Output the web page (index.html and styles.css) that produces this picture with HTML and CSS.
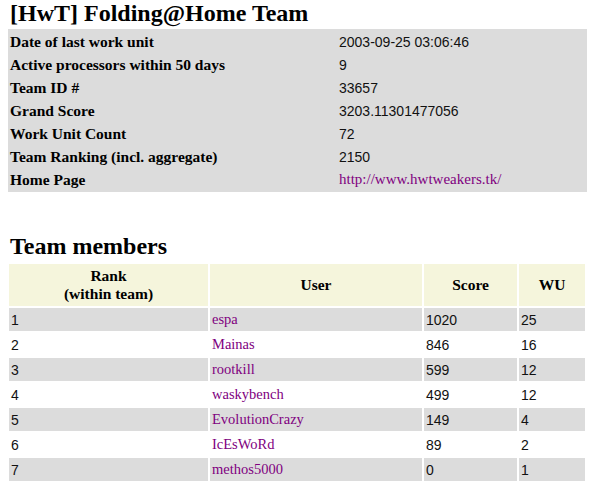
FILE: index.html
```html
<!DOCTYPE html>
<html>
<head>
<meta charset="utf-8">
<title>[HwT] Folding@Home Team</title>
<link rel="stylesheet" href="styles.css">
</head>
<body>
<h1 class="title">[HwT] Folding@Home Team</h1>
<table class="info">
  <tr><td class="label">Date of last work unit</td><td class="num">2003-09-25 03:06:46</td></tr>
  <tr><td class="label">Active processors within 50 days</td><td class="num">9</td></tr>
  <tr><td class="label">Team ID #</td><td class="num">33657</td></tr>
  <tr><td class="label">Grand Score</td><td class="num">3203.11301477056</td></tr>
  <tr><td class="label">Work Unit Count</td><td class="num">72</td></tr>
  <tr><td class="label">Team Ranking (incl. aggregate)</td><td class="num">2150</td></tr>
  <tr><td class="label">Home Page</td><td class="link"><a href="#">http://www.hwtweakers.tk/</a></td></tr>
</table>
<h2 class="section">Team members</h2>
<table class="members">
  <tr>
    <th class="c-rank">Rank<br>(within team)</th>
    <th class="c-user">User</th>
    <th class="c-score">Score</th>
    <th class="c-wu">WU</th>
  </tr>
  <tr class="odd"><td class="num">1</td><td class="name"><a href="#">espa</a></td><td class="num">1020</td><td class="num">25</td></tr>
  <tr><td class="num">2</td><td class="name"><a href="#">Mainas</a></td><td class="num">846</td><td class="num">16</td></tr>
  <tr class="odd"><td class="num">3</td><td class="name"><a href="#">rootkill</a></td><td class="num">599</td><td class="num">12</td></tr>
  <tr><td class="num">4</td><td class="name"><a href="#">waskybench</a></td><td class="num">499</td><td class="num">12</td></tr>
  <tr class="odd"><td class="num">5</td><td class="name"><a href="#">EvolutionCrazy</a></td><td class="num">149</td><td class="num">4</td></tr>
  <tr><td class="num">6</td><td class="name"><a href="#">IcEsWoRd</a></td><td class="num">89</td><td class="num">2</td></tr>
  <tr class="odd"><td class="num">7</td><td class="name"><a href="#">methos5000</a></td><td class="num">0</td><td class="num">1</td></tr>
</table>
</body>
</html>
```
FILE: styles.css
```css
html, body {
  background: #ffffff;
}
body {
  margin: 0;
  padding: 0 5px 0 8px;
  font-family: "Liberation Serif", "Times New Roman", serif;
  color: #000000;
}
.title {
  margin: 0 0 3px 2px;
  font-size: 24px;
  line-height: 26px;
  font-weight: bold;
}
.info {
  width: 579px;
  table-layout: fixed;
  border-collapse: separate;
  border-spacing: 0;
  padding: 1px 0;
  background: #dcdcdc;
}
.info td {
  height: 23px;
  padding: 0 2px;
  box-sizing: border-box;
  vertical-align: middle;
}
.info .label {
  width: 329px;
  font-weight: bold;
  font-size: 15.5px;
}
.num {
  font-family: "Liberation Sans", Arial, sans-serif;
  font-size: 14px;
  color: #111111;
}
.link {
  font-size: 15px;
}
.name {
  font-size: 14.5px;
}
.link a,
.name a {
  color: #800080;
  text-decoration: none;
}
.section {
  margin: 41px 0 3px 2px;
  font-size: 24px;
  line-height: 26px;
  font-weight: bold;
}
.members {
  width: 580px;
  margin-left: -1px;
  table-layout: fixed;
  border-collapse: separate;
  border-spacing: 2px;
}
.members th {
  height: 42px;
  padding: 0 2px;
  box-sizing: border-box;
  background: #f5f5dc;
  font-size: 15.5px;
  line-height: 18px;
  font-weight: bold;
  text-align: center;
  vertical-align: middle;
}
.members td {
  height: 23px;
  padding: 0 2px;
  box-sizing: border-box;
  vertical-align: middle;
}
.members .odd td {
  background: #dcdcdc;
}
.c-rank { width: 199px; }
.c-user { width: 212px; }
.c-score { width: 93px; }
.c-wu { width: 66px; }
```
